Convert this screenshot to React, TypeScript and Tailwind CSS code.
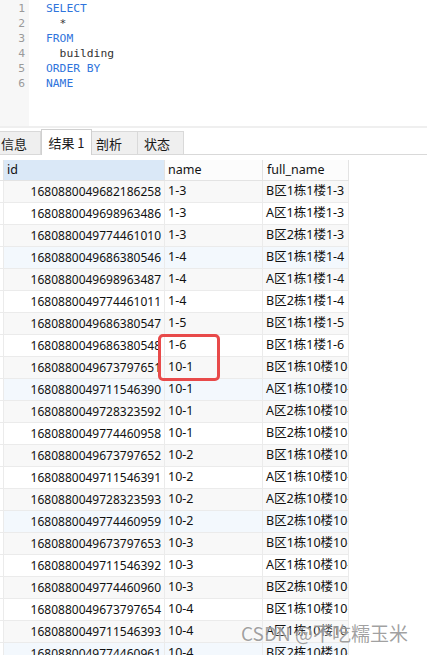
import React from "react";

const rows: [string, string, string][] = [
  ["1680880049682186258", "1-3", "B区1栋1楼1-3"],
  ["1680880049698963486", "1-3", "A区1栋1楼1-3"],
  ["1680880049774461010", "1-3", "B区2栋1楼1-3"],
  ["1680880049686380546", "1-4", "B区1栋1楼1-4"],
  ["1680880049698963487", "1-4", "A区1栋1楼1-4"],
  ["1680880049774461011", "1-4", "B区2栋1楼1-4"],
  ["1680880049686380547", "1-5", "B区1栋1楼1-5"],
  ["1680880049686380548", "1-6", "B区1栋1楼1-6"],
  ["1680880049673797651", "10-1", "B区1栋10楼10-1"],
  ["1680880049711546390", "10-1", "A区1栋10楼10-1"],
  ["1680880049728323592", "10-1", "A区2栋10楼10-1"],
  ["1680880049774460958", "10-1", "B区2栋10楼10-1"],
  ["1680880049673797652", "10-2", "B区1栋10楼10-2"],
  ["1680880049711546391", "10-2", "A区1栋10楼10-2"],
  ["1680880049728323593", "10-2", "A区2栋10楼10-2"],
  ["1680880049774460959", "10-2", "B区2栋10楼10-2"],
  ["1680880049673797653", "10-3", "B区1栋10楼10-3"],
  ["1680880049711546392", "10-3", "A区1栋10楼10-3"],
  ["1680880049774460960", "10-3", "B区2栋10楼10-3"],
  ["1680880049673797654", "10-4", "B区1栋10楼10-4"],
  ["1680880049711546393", "10-4", "A区1栋10楼10-4"],
  ["1680880049774460961", "10-4", "B区2栋10楼10-4"],
];

const codeLines: { kw: boolean; text: string }[] = [
  { kw: true, text: "SELECT" },
  { kw: false, text: "  *" },
  { kw: true, text: "FROM" },
  { kw: false, text: "  building" },
  { kw: true, text: "ORDER BY" },
  { kw: true, text: "NAME" },
];

function rowBg(i: number) {
  if (i % 6 === 3) return "bg-[#f3f8fd]";
  if (i % 2 === 0) return "bg-[#f8f8f8]";
  return "bg-white";
}

export default function App() {
  return (
    <div className="relative w-[427px] h-[655px] overflow-hidden bg-white text-[#111]">
      {/* editor */}
      <div className="flex h-[126px]">
        <div className="w-[29px] bg-[#f7f7f7] pt-[1px] pr-[4px] flex flex-col items-end font-['DejaVu_Sans_Mono',monospace] text-[11.3px] leading-[15px] text-[#9a9a9a]">
          {codeLines.map((_, i) => (
            <div key={i}>{i + 1}</div>
          ))}
        </div>
        <div className="pl-[17px] pt-[1px] flex flex-col font-['DejaVu_Sans_Mono',monospace] text-[11.3px] leading-[15px]">
          {codeLines.map((l, i) => (
            <div key={i} className={`whitespace-pre ${l.kw ? "text-[#2f74dc]" : "text-[#333]"}`}>
              {l.text}
            </div>
          ))}
        </div>
      </div>
      <div className="h-[2px] bg-[#efefef]" />

      {/* tabs */}
      <div className="h-[27px] flex items-end font-['Noto_Sans_CJK_SC',sans-serif] text-[13px] text-[#1a1a1a] border-b border-[#d9d9d9]">
        <div className="w-[41px] h-[23px] bg-[#efefef] border-r border-t border-[#d9d9d9] flex items-center pl-[1px] leading-none">
          信息
        </div>
        <div className="w-[51px] h-[26px] -mb-px bg-white border-x border-t border-[#d0d0d0] flex items-center justify-center leading-none">
          结果 1
        </div>
        <div className="w-[46px] h-[23px] bg-[#efefef] border-r border-t border-[#d9d9d9] flex items-center pl-[4px] leading-none">
          剖析
        </div>
        <div className="w-[46px] h-[23px] bg-[#efefef] border-r border-t border-[#d9d9d9] flex items-center pl-[6px] leading-none">
          状态
        </div>
      </div>
      <div className="h-[5px]" />

      {/* grid */}
      <div className="font-['Noto_Sans','Noto_Sans_CJK_SC',sans-serif] text-[12px] text-[#111]">
        <div className="flex h-[21px] text-[12.5px]">
          <div className="w-[4px] border-r border-b border-[#e3e3e3]" />
          <div className="w-[161px] bg-[#dae8f7] border-r border-b border-[#e3e3e3] flex items-center pl-[3px]">id</div>
          <div className="w-[98px] bg-[#fcfcfc] border-r border-b border-[#e3e3e3] flex items-center pl-[3px]">name</div>
          <div className="w-[86px] bg-[#fcfcfc] border-r border-b border-[#e3e3e3] flex items-center pl-[4px]">full_name</div>
        </div>
        {rows.map((r, i) => (
          <div key={i} className="flex h-[22px]">
            <div className="w-[4px] border-r border-b border-[#ebebeb] bg-white" />
            <div className={`w-[161px] ${rowBg(i)} border-r border-b border-[#ebebeb] flex items-center justify-end pr-[3px] overflow-hidden whitespace-nowrap`}>
              {r[0]}
            </div>
            <div className={`w-[98px] ${rowBg(i)} border-r border-b border-[#ebebeb] flex items-center pl-[3px] overflow-hidden whitespace-nowrap text-[12.5px]`}>
              {r[1]}
            </div>
            <div className={`w-[86px] ${rowBg(i)} border-r border-b border-[#ebebeb] flex items-center pl-[3px] overflow-hidden whitespace-nowrap text-[12.5px]`}>
              {r[2]}
            </div>
          </div>
        ))}
      </div>

      {/* red highlight */}
      <div className="absolute left-[158px] top-[334px] w-[62px] h-[47px] border-[3px] border-[#e84a4a] rounded-[5px]" />

      {/* watermark */}
      <div className="absolute left-[241px] top-[621px] font-['Noto_Sans_CJK_SC',sans-serif] text-[19px] leading-[24px] text-[rgba(130,130,130,0.75)] [text-shadow:0_0_2px_rgba(255,255,255,0.9)] whitespace-nowrap">
        CSDN @不吃糯玉米
      </div>
    </div>
  );
}
